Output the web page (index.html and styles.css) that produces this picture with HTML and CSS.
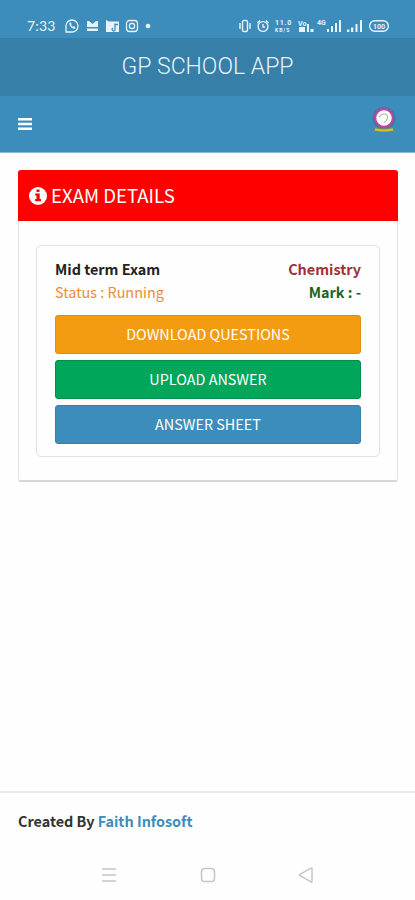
FILE: index.html
```
<!DOCTYPE html>
<html lang="en">
<head>
    <meta charset="utf-8">
    <title>GP School App</title>
    <link rel="stylesheet" href="styles.css">
</head>
<body>
    <div class="status-bar">
        <span class="time">7:33</span>
        <svg class="status-left" width="90" height="14" viewBox="0 0 90 14" fill="none" stroke="#e6f3fa" stroke-width="1.3">
            <path d="M1 13V7A6 6 0 1 1 7 13Z"/>
            <path d="M4.3 4c0 3.200 2.500 5.800 5.500 5.800l.5-1.800-1.900-.9-.8.8-1.600-1.900.7-.8-.8-1.700Z" fill="#e6f3fa" stroke="none"/>
            <path d="M22 2l2 0 3.500 3L31 2h2v6H22ZM22 9.500h11V12H22Z" fill="#e6f3fa" stroke="none"/>
            <path d="M41 1l3 1.500h10V13H41Z" fill="#e6f3fa" stroke="none"/>
            <path d="M50 4.500v5.500m0-4.500h3M50 10a1.500 1.500 0 1 1-2-1" stroke="#3c8dbc"/>
            <rect x="61.500" y="1.500" width="11" height="11" rx="3"/>
            <rect x="64.500" y="4.500" width="5" height="5" rx="2"/>
            <circle cx="83" cy="7" r="2.300" fill="#e6f3fa" stroke="none"/>
        </svg>
        <div class="status-right">
            <svg width="31" height="14" viewBox="0 0 31 14" fill="none" stroke="#e6f3fa" stroke-width="1.4">
                <rect x="3.500" y="1.500" width="5" height="11" rx="1.500"/>
                <path d="M1 4v6M11 4v6"/>
                <circle cx="24" cy="7.500" r="4.900"/>
                <path d="M24 5v3h2M18.200 4l3-2.500M29.800 4l-3-2.500"/>
            </svg>
            <span class="speed"><b>11.0</b><b>KB/S</b></span>
            <svg width="19" height="14" viewBox="0 0 19 14" fill="#e6f3fa">
                <text x="0" y="7" class="tiny">Vo</text>
                <path d="M1 8h6v5H1ZM9 5h2v8H9ZM12.500 10h3v3h-3Z"/>
            </svg>
            <span class="net">4G</span>
            <svg width="62" height="14" viewBox="0 0 62 14" fill="#e6f3fa">
                <path d="M0 10h2v3H0ZM4 7h2v6H4ZM8 4h2v9H8ZM12 1h2v12h-2Z"/>
                <path d="M20 10.500h2.300V13H20ZM24 8.500h2.300V13H24ZM28.500 5h2v8h-2ZM33 1h2v12h-2Z"/>
                <rect x="42.700" y="1.700" width="18.600" height="10.600" rx="5" fill="none" stroke="#e6f3fa" stroke-width="1.400"/>
                <text x="46" y="9.700" class="tiny">100</text>
            </svg>
        </div>
    </div>

    <header class="logo">GP SCHOOL APP</header>

    <nav class="navbar">
        <svg width="14" height="13" viewBox="0 0 14 13" fill="#fff">
            <path d="M0 0h14v2.500H0ZM0 4.800h14v2.500H0ZM0 9.600h14v2.500H0Z"/>
        </svg>
        <svg width="26" height="28" viewBox="0 0 26 28">
            <circle cx="13" cy="11.500" r="11.500" fill="#367ea5"/>
            <circle cx="13" cy="11" r="9" fill="#fff" stroke="#b6479f" stroke-width="2.500"/>
            <path d="M8 10q4-5 8-2 2 4-3 8" fill="none" stroke="#b4c3b2" stroke-width="1.300"/>
            <path d="M2 25l3-5q8 3 16 0l3 5-5-1q-6 2-12 0Z" fill="#709b50"/>
            <path d="M4 22.500q9 2 18 0" fill="none" stroke="#dfbd38" stroke-width="2"/>
        </svg>
    </nav>

    <main class="content">
        <section class="box">
            <h3 class="box-header">
                <svg width="18" height="18" viewBox="0 0 18 18">
                    <circle cx="9" cy="9" r="9" fill="#fff"/>
                    <path d="M7.500 2.500h3V5h-3ZM6.200 6.500h4.500v5.500h1.300v2.200H6.200V12h1.300V8.600H6.200Z" fill="#f00"/>
                </svg>
                <span>EXAM DETAILS</span>
            </h3>
            <div class="box-body">
                <div class="exam">
                    <div class="row">
                        <span class="name">Mid term Exam</span>
                        <span class="subject">Chemistry</span>
                    </div>
                    <div class="row">
                        <span class="status">Status : Running</span>
                        <span class="mark">Mark : -</span>
                    </div>
                    <div class="buttons">
                        <button class="btn btn-warning">DOWNLOAD QUESTIONS</button>
                        <button class="btn btn-success">UPLOAD ANSWER</button>
                        <button class="btn btn-primary">ANSWER SHEET</button>
                    </div>
                </div>
            </div>
        </section>
    </main>

    <footer class="footer">Created By <a href="#">Faith Infosoft</a></footer>

    <div class="phone-nav">
        <svg width="16" height="16" viewBox="0 0 16 16"><path d="M1 2h14M1 8h14M1 14h14"/></svg>
        <svg width="16" height="16" viewBox="0 0 16 16"><rect x="1.500" y="1.500" width="13" height="13" rx="3"/></svg>
        <svg width="16" height="16" viewBox="0 0 16 16"><path d="M14 1.500v13q0 1-1 .4L2 8.600q-1-.6 0-1.200L13 1.100q1-.6 1 .4Z"/></svg>
    </div>
</body>
</html>
```
FILE: styles.css
```
* {
    box-sizing: border-box;
}

body {
    margin: 0;
    height: 900px;
    display: flex;
    flex-direction: column;
    background-color: #fefefe;
    font-family: "Noto Sans CJK SC", "Open Sans", sans-serif;
    overflow: hidden;
}

.status-bar {
    height: 38px;
    padding: 14px 26px 0 27px;
    display: flex;
    align-items: center;
    background-color: #3c8dbc;
    color: #e6f3fa;
}

.time {
    width: 38px;
    font-family: Lato, sans-serif;
    font-size: 14px;
    line-height: 20px;
    letter-spacing: 0.2px;
}

.status-right {
    margin-left: auto;
    display: flex;
    align-items: center;
    font-family: Roboto, sans-serif;
}

.speed {
    width: 28px;
    padding-left: 5px;
    display: flex;
    flex-direction: column;
    font-size: 7px;
    line-height: 8px;
    letter-spacing: 0.7px;
}

.speed b + b {
    font-size: 5px;
    line-height: 6px;
    letter-spacing: 1px;
}

.net {
    width: 10px;
    height: 14px;
    font-size: 7px;
    font-weight: bold;
    line-height: 9px;
}

.tiny {
    font: bold 7px Roboto, sans-serif;
}

.logo {
    height: 58px;
    background-color: #367fa9;
    color: #e8f3fa;
    font-family: Roboto, sans-serif;
    font-size: 23px;
    font-weight: 300;
    line-height: 57px;
    text-align: center;
}

.navbar {
    height: 57px;
    padding: 0 18px;
    display: flex;
    justify-content: space-between;
    align-items: center;
    background-color: #3c8dbc;
    border-bottom: 1px solid #8bbad6;
}

.navbar svg:last-child {
    margin: 0 0 6px;
}

.content {
    flex: 1;
    padding: 17px 17px 0 18px;
}

.box {
    height: 312px;
    border-radius: 3px;
    border: 1px solid #e3e5e6;
    border-top: none;
    border-bottom: 2px solid #d5d7d8;
}

.box-header {
    margin: 0 -1px;
    height: 51px;
    padding-left: 11px;
    display: flex;
    align-items: center;
    gap: 4px;
    border-radius: 3px 3px 0 0;
    background-color: #f00;
    color: #fff;
    font-size: 18.6px;
    font-weight: normal;
    line-height: 49px;
}

.box-header span {
    height: 51px;
}

.box-body {
    padding: 24px 17px;
}

.exam {
    height: 212px;
    padding: 11px 18px 0;
    border: 1px solid #e0e2e3;
    border-radius: 5px;
}

.row {
    display: flex;
    justify-content: space-between;
    font-size: 14.4px;
    line-height: 23px;
}

.name {
    color: #222;
    font-weight: bold;
}

.subject {
    color: #a03038;
    font-weight: bold;
}

.status {
    color: #f08a38;
}

.mark {
    color: #1b641f;
    font-weight: bold;
}

.buttons {
    display: flex;
    flex-direction: column;
    gap: 6px;
    margin-top: 12px;
}

.btn {
    height: 39px;
    padding: 0 0 2px;
    border: 1px solid;
    border-radius: 3px;
    color: #fff;
    font-family: inherit;
    font-size: 14.4px;
    line-height: 35px;
}

.btn-warning {
    background-color: #f39c12;
    border-color: #e08e0b;
}

.btn-success {
    background-color: #00a65a;
    border-color: #008d4c;
}

.btn-primary {
    background-color: #3c8dbc;
    border-color: #367fa9;
}

.footer {
    height: 60px;
    padding-left: 18px;
    border-top: 2px solid #e8eaeb;
    color: #333;
    font-size: 14.4px;
    font-weight: bold;
    line-height: 56px;
}

.footer a {
    color: #3c8dbc;
    text-decoration: none;
}

.phone-nav {
    height: 49px;
    padding: 0 101px 1px;
    display: flex;
    justify-content: space-between;
    align-items: center;
}

.phone-nav svg {
    fill: none;
    stroke: #c6c6c6;
    stroke-width: 1.5;
}
```
